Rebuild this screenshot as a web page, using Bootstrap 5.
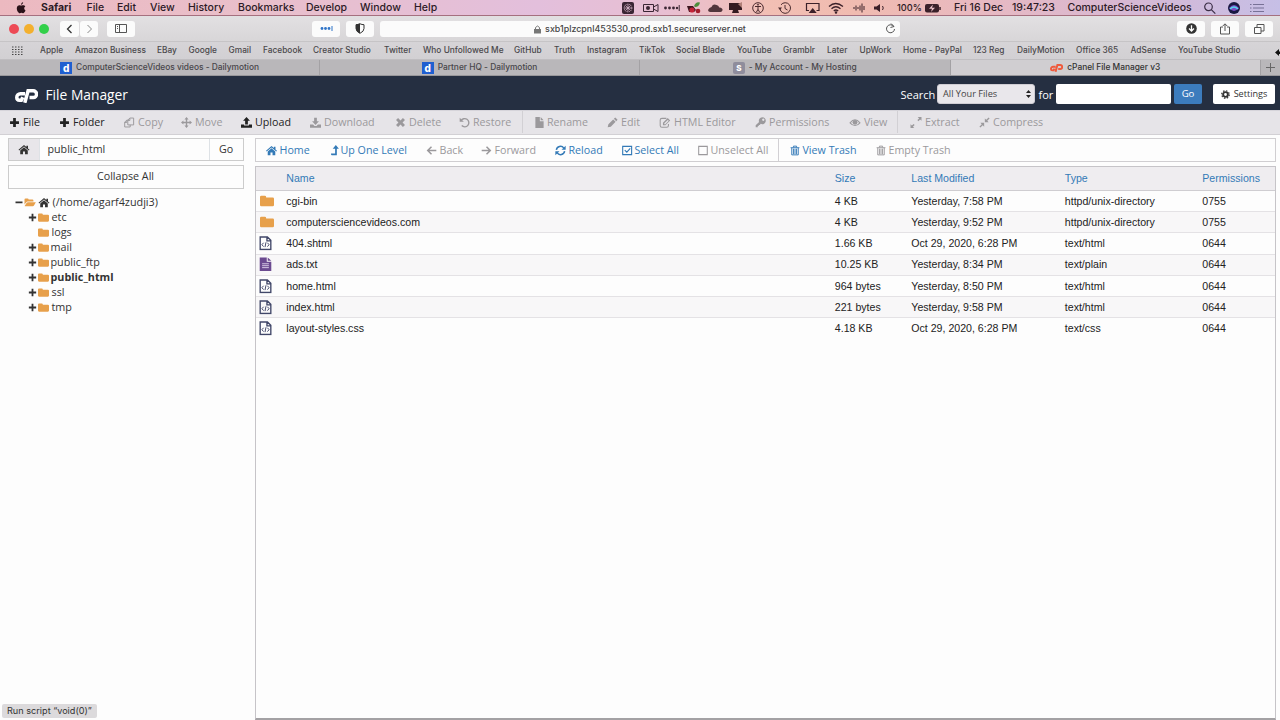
<!DOCTYPE html>
<html lang="en">
<head>
<meta charset="utf-8">
<title>cPanel File Manager v3</title>
<link href="https://cdn.jsdelivr.net/npm/bootstrap@5.3.0/dist/css/bootstrap.min.css" rel="stylesheet">
<style>
html,body{height:720px;overflow:hidden}
body{background:#fdfdfd;color:#333;font:10.7px/1 "Open Sans",sans-serif}
svg{display:block;flex:none;overflow:visible}
.ic{width:11px;height:11px;fill:currentColor}
.tracks{display:grid;align-items:center;white-space:nowrap}
.mac{font-family:Inter,sans-serif}
/* macOS menu bar */
.menubar{height:16px;padding-top:1px;color:#2c1a26;font-size:10.5px;font-weight:500;border-bottom:1px solid #a5707f;
 background:linear-gradient(90deg,#ecb9c0 0,#e9bfcb 20%,#e3bfdc 42%,#e8bfd2 52%,#f2bfb4 60%,#f0bbb0 67%,#e9b9c0 76%,#d7b8d4 88%,#c6bfe6 100%);
 grid-template-columns:15px 26px 45.5px 30.5px 33px 38px 50px 68px 54px 54px 208px 22px 22px 22px 20px 21px 23px 27px 27px 25px 22px 21px 23px 28px 29px 58px 55.5px 136px 28px 20px 31px}
.menubar svg{height:12px;width:13px}
/* Safari chrome */
.chrome{height:26px;background:linear-gradient(#e2e0e2,#d8d6d8);border-bottom:1px solid #c6c4c6;
 grid-template-columns:9px 15px 15px 21px 20px 27px 205px 34px 34px 797px 34px 34px 34px}
.dot{width:10px;height:10px;border-radius:50%}
.chrome .key{height:16px;background:#fbfbfb;border-radius:3px;display:flex;align-items:center;justify-content:center;color:#555}
.chrome .address{width:520px;font-size:8.9px;font-weight:500;color:#444;position:relative;padding-top:1px}
.reload{position:absolute;right:4px;top:2px}
.bookmarks{height:17px;background:linear-gradient(#d6d4d7,#d2d0d3);color:#4a484b;font-size:8.3px;font-weight:500;letter-spacing:.03px;
 grid-template-columns:11px 29px 35px 82px 31.5px 40px 34.5px 50px 71px 39px 91px 40px 33px 52px 37px 61px 46px 44px 32.5px 43.5px 70px 44px 59px 54.5px 47.5px 90px}
.tabs{height:17px;background:#b9b7ba;border-top:1px solid #c0bec1;border-bottom:1px solid #98979a;font-size:8.4px;font-weight:500;letter-spacing:-.02px;color:#48464a;
 grid-template-columns:320px 320px 310.5px 310.5px 19px}
.tabs>div{height:15px;display:flex;align-items:center;justify-content:center;gap:4px;border-right:1px solid #a3a1a4}
.tabs .active{background:#d0ced1;color:#333}
.fav{width:12px;height:12px;background:#1f5fd0;color:#fff;font-weight:800;font-size:10px;text-align:center;line-height:12px}
.fav.acct{background:#8f8d9c;border-radius:2px;font-size:8px}
.cursor{position:absolute;left:1275px;top:48px}
/* cPanel header */
.masthead{height:34px;padding-top:2px;background:#252f41;color:#fff;grid-template-columns:15px 30.5px 855px 36.500px 101.5px 17.5px 118px 39px 64px}
.masthead .ttl{font-size:13.8px;padding-top:2px}
.sel{height:20px;width:98px;border-radius:3px;background:#e9e7eb;border:1px solid #cfcdd3;color:#444;font-size:9.2px;padding:0 3px 0 5px}
.inp{height:20px;width:114.5px;border-radius:2px;background:#fff}
.go{height:20px;width:28px;background:#3c7cbd;border-radius:2px;font-size:9.6px}
.setb{height:20px;width:62px;background:#fff;color:#333;border-radius:2px;font-size:9.1px}
.tools{height:25px;padding-bottom:2px;background:#e6e4e8;border-bottom:1px solid #d2d0d4;border-top:1px solid #d6d4da;color:#222;
 grid-template-columns:9px 50px 65px 57px 60px 69px 85px 64px 62.5px 13.5px 72px 52px 96px 94px 48px 13px 69px 90px}
.tools>div,.acts>div,.tree>div{display:flex;align-items:center}
.tools .ic,.acts .ic{margin-right:3px}
.tools .ic{margin-top:1px}
.off{color:#9b999c}
.vr2{height:22px;width:1px;background:#d2d0d4}
/* sidebar */
.side{width:236px;margin:3px 11.5px 0 7.5px}
.path{height:23px;border:1px solid #ccc;display:grid;grid-template-columns:31px 1fr 33px;align-items:stretch}
.path>div{display:flex;align-items:center}
.cola{height:24px;margin-top:3.5px;border:1px solid #ccc}
.tree{margin-top:6px;font-size:10.8px}
.tree>div{height:15.1px;padding-left:20px}
.tree>.root{padding-left:10px}
.tree .ic{height:11px;margin-right:1px}
.tree .p1{width:9px;height:9px;margin-right:1px}
.tree span{padding-left:2px}
.tree .long{padding-left:1px}
.fold{color:#e7a04b}
/* main panel */
.main{width:1021px;padding-top:3px}
.acts{height:24px;padding-bottom:1px;border:1px solid #d0ced1;color:#337ab7;
 grid-template-columns:9.5px 65px 95px 55px 74px 67px 76px 80px 12px 86px 90px}
.files{height:554px;margin-top:4px;border:1px solid #c6c4c8;border-bottom:2px solid #a3a1a4;background:#fdfdfd;font-family:"Liberation Sans",Arial,sans-serif;font-size:10.6px;color:#222}
.frow{height:21.2px;border-bottom:1px solid #e4e2e5;grid-template-columns:3px 27.3px 548.5px 76.5px 153.5px 137.5px 73px}
.frow:nth-child(odd){background:#f8f7f8}
.frow.hd{height:24px;background:#efedf0;color:#337ab7;border-color:#cfcdd1}
.frow:last-child{border:0;background:none}
.frow svg{width:13px;height:14.5px}
.status{position:absolute;left:2px;bottom:2px;height:14px;width:95px;background:#dcdadc;border-radius:2px;font-size:9.15px;padding:0 0 1px 5px;color:#333;display:flex;align-items:center}
</style>
</head>
<body>
<svg width="0" height="0" class="position-absolute"><defs>
<symbol id="plus" viewBox="0 0 16 16"><path d="M6 1.5h4V6h4.500v4H10v4.500H6V10H1.500V6H6z"/></symbol>
<symbol id="plus2" viewBox="0 0 16 16"><path d="M6.400 1.500h3.200v4.900h4.900v3.200H9.600v4.900H6.400V9.600H1.500V6.400h4.900z"/></symbol>
<symbol id="minus" viewBox="0 0 16 16"><path d="M1 6h14v3.500H1z"/></symbol>
<symbol id="copy" viewBox="0 0 16 16"><path d="M8.500 1.500H14v10H5.500V4.500l3-3M8.500 2v3H5.500M5.500 4.500H4L1 7.500v7h8v-3M4 5v3H1" fill="none" stroke="currentColor" stroke-width="1.400"/></symbol>
<symbol id="move" viewBox="0 0 16 16"><path d="M8 0l3 3.500H9V7h3.500V5L16 8l-3.500 3V9H9v3.500h2L8 16l-3-3.500h2V9H3.500v2L0 8l3.500-3v2H7V3.500H5z"/></symbol>
<symbol id="up" viewBox="0 0 16 16"><path d="M8 0l5 5.500h-3V11H6V5.500H3zM0 11h4.500v1.500h7V11H16v4.500H0z"/></symbol>
<symbol id="down" viewBox="0 0 16 16"><path d="M8 11.500L3 6h3V1h4v5h3zM0 11h4.500l2 2h3l2-2H16v4.500H0z"/></symbol>
<symbol id="x" viewBox="0 0 16 16"><path d="M4.500 1.500L8 5l3.500-3.500 3 3L11 8l3.500 3.500-3 3L8 11l-3.500 3.500-3-3L5 8 1.500 4.500z"/></symbol>
<symbol id="undo" viewBox="0 0 16 16"><path d="M3 5.500A6 6 0 1 1 4 12.500" fill="none" stroke="currentColor" stroke-width="2"/><path d="M1 1v6h6z"/></symbol>
<symbol id="file" viewBox="0 0 12 16"><path d="M0 0h6.500v6H12v10H0zM7.700 0L12 4.800H7.700z"/></symbol>
<symbol id="pencil" viewBox="0 0 16 16"><path d="M1 15l1-4.500L9 3.500 12.500 7l-7 7zM10 2.500L12 .6 15.400 4l-2 2z"/></symbol>
<symbol id="edit" viewBox="0 0 16 16"><path d="M10 2H3.500Q1 2 1 4.500v8Q1 15 3.500 15h7q2.500 0 2.500-2.500V10" fill="none" stroke="currentColor" stroke-width="1.500"/><path d="M5 12V8.500l7-7L15.500 5l-7 7zM7 9v1.500h1.500l5-5-1.500-1.300z" fill-rule="evenodd"/></symbol>
<symbol id="key" viewBox="0 0 16 16"><path fill-rule="evenodd" d="M10.500.5a5 5 0 1 1-2.200 9.400L7 11.500H5.500V13H4v2H1v-3l4.900-4.700A5 5 0 0 1 10.500.5zM12 2.300a1.700 1.700 0 1 0 .1 0z"/></symbol>
<symbol id="eye" viewBox="0 0 16 16"><path d="M.8 8.500Q8-.5 15.200 8.500 8 16.500.8 8.500z" fill="none" stroke="currentColor" stroke-width="1.500"/><circle cx="8" cy="7.800" r="3.500"/></symbol>
<symbol id="extract" viewBox="0 0 16 16"><path d="M16 0v5.500l-2-2-2.500 2.500-1.500-1.500L12.500 2l-2-2zM0 16v-5.500l2 2L4.500 10 6 11.500 3.500 14l2 2z"/></symbol>
<symbol id="compress" viewBox="0 0 16 16"><path d="M8.500 7.500V2l2 2L14 .6 15.400 2 12 5.500l2 2zM7.500 8.500V14l-2-2L2 15.400.6 14 4 10.500l-2-2z"/></symbol>
<symbol id="home" viewBox="0 0 16 16"><path d="M0 8.500L8 1.500l3.500 3V2.500h2.300v4L16 8.500l-1 1L8 3.500 1 9.500z"/><path d="M2.500 9.500L8 4.800l5.500 4.700V15H9.500v-4h-3v4h-4z"/></symbol>
<symbol id="level" viewBox="0 0 16 16"><path d="M7 0L11.500 5.500h-3V15H1l-2-2.500H6v-7H2.500z"/></symbol>
<symbol id="left" viewBox="0 0 16 16"><path d="M15 8H2.500M8 2.500L2.500 8 8 13.500" fill="none" stroke="currentColor" stroke-width="2.200"/></symbol>
<symbol id="right" viewBox="0 0 16 16"><path d="M1 8h12.500M8 2.500L13.500 8 8 13.500" fill="none" stroke="currentColor" stroke-width="2.200"/></symbol>
<symbol id="sync" viewBox="0 0 16 16"><path d="M2 7A6 6 0 0 1 12.800 4.500M14 9A6 6 0 0 1 3.200 11.500" fill="none" stroke="currentColor" stroke-width="2.200"/><path d="M15.500 1v6h-6zM.5 15V9h6z"/></symbol>
<symbol id="chk" viewBox="0 0 16 16"><path d="M1 2h13v12H1zM4 7.500L7 10.500l5-5.500" fill="none" stroke="currentColor" stroke-width="1.600"/></symbol>
<symbol id="box" viewBox="0 0 16 16"><path d="M1 2h12.500v12H1z" fill="none" stroke="currentColor" stroke-width="1.500"/></symbol>
<symbol id="trash" viewBox="0 0 16 16"><path d="M1 3.500h14M5.500 3V1h5v2M2.800 4v11h10.400V4M5.500 5v9M8 5v9M10.500 5v9" fill="none" stroke="currentColor" stroke-width="1.500"/></symbol>
<symbol id="gear" viewBox="0 0 16 16"><g fill="none" stroke="currentColor"><circle cx="8" cy="8" r="4.200" stroke-width="3.400"/><circle cx="8" cy="8" r="6.700" stroke-width="2.200" stroke-dasharray="2.630 2.630"/></g></symbol>
<symbol id="folder" viewBox="0 0 16 16"><path d="M0 3.500Q0 2 1.500 2h4Q7 2 7 3.500V4h7.500Q16 4 16 5.500v7q0 1.500-1.500 1.500h-13Q0 14 0 12.500z"/></symbol>
<symbol id="open" viewBox="0 0 16 16"><path d="M0 11V3.500Q0 2 1.500 2h3Q6 2 6 3.500h5.500Q13 3.500 13 5v1.500H4.500Q3.500 6.500 3 7.200zM.2 13l3-4.500Q3.700 7.500 5 7.500h11.500L14 12q-.7 1.500-2 1.500H.5z"/></symbol>
<symbol id="code" viewBox="0 0 13 15"><path d="M1 1h7.500L12 4.500V14H1zM8 1v4h4" fill="none" stroke="#414769" stroke-width="1.400"/><path d="M4.500 7L2.800 9l1.700 2M8.500 7l1.700 2-1.700 2M7 6.500l-1 5" fill="none" stroke="#414769"/></symbol>
<symbol id="txt" viewBox="0 0 13 15"><path d="M.5.5h7.300V5h4.700v9.500H.5zM8.800.5l3.700 3.500H8.800z" fill="#6b4a90"/><path d="M3 7h7M3 9h7M3 11h7" stroke="#d8cbe6"/></symbol>
<symbol id="cp" viewBox="0 0 23 14"><path d="M10 4.800H5.500A3.600 3.600 0 0 0 1.800 8.500Q1.800 11.200 4.500 11.200h1.800L7.800 8.200M9.800 13.800l3.300-12h5a3.300 3.300 0 0 1 .2 6.800H14.500" fill="none" stroke="currentColor" stroke-width="3.500"/></symbol>
</defs></svg>

<header class="mac">
<div class="menubar tracks"><span></span>
<svg viewBox="0 0 13 12" fill="#2a1219"><path d="M5.500 3.400C4 2.700 1.800 3.600 1.800 6.200s1.700 5 3 5c.7 0 .9-.4 1.600-.4s1 .4 1.600.4c1 0 2-1.300 2.500-2.700C8.800 7.600 8.800 5 10.300 4.200 9.400 3 8 3 7.300 3.300q-.9.400-1.800.1zM6 2.900Q6 .7 8.200 0 8.300 2.300 6 2.900z"/></svg>
<b>Safari</b><span>File</span><span>Edit</span><span>View</span><span>History</span><span>Bookmarks</span><span>Develop</span><span>Window</span><span>Help</span>
<svg viewBox="0 0 13 12"><rect width="12" height="12" rx="2" fill="#3a2533"/><circle cx="6" cy="6" r="3.800" fill="none" stroke="#e3bfd2" stroke-dasharray="1.200 .8"/><path d="M6 3v6M3 6h6M4 4l4 4M8 4L4 8" stroke="#e3bfd2" stroke-width=".7"/></svg>
<svg viewBox="0 0 13 12" fill="none" stroke="#3a2533"><path d="M-.5 2.500h10v7H-.5zM9.500 5l4.500-2.500v7L9.500 7"/><circle cx="4" cy="6" r="2" fill="#3a2533" stroke="none"/></svg>
<svg viewBox="0 0 13 12" fill="#3a2533"><circle cx="-.5" cy="6" r="1.400"/><circle cx="3.500" cy="6" r="1.400"/><circle cx="7.500" cy="6" r="1.400"/><circle cx="11" cy="6" r="1.200"/><path d="M12.700 3h1v6h-1z"/></svg>
<svg viewBox="0 0 13 12"><path d="M-1 4h6l3 4-2 2H1z" fill="#3d1520"/><circle cx="4" cy="8" r="2.600" fill="#c22237"/><circle cx="10" cy="9" r="2.300" fill="#a31d2c"/><path d="M6 4q2-5 6-3.500Q11 5 7 5z" fill="#4c8d3b"/></svg>
<svg viewBox="0 0 13 12"><path d="M2.500 10Q-.5 9.500.3 7.500T3.500 5Q5 1.500 8.500 3q2 .3 2.800 2.500Q15 6 14.500 8.300T11.500 10z" fill="#51363c"/></svg>
<svg viewBox="0 0 13 12" fill="#341b21"><path d="M0 1h13v7H0zM4 8h5l1 3H3z"/><path d="M9 2l4-2v6z" fill="#b08078"/></svg>
<svg viewBox="0 0 13 12" fill="none" stroke="#4a2a2e"><circle cx="6" cy="6" r="5.300"/><path d="M3 4.500h6M6 4.500v2.800L4.500 10M6 7.300L7.500 10"/><circle cx="6" cy="2.700" r=".6"/></svg>
<svg viewBox="0 0 13 12" fill="none" stroke="#4a2a2e"><path d="M1 7A5.300 5.300 0 1 0 2 2.800M6 3v3.500L8.500 8"/><path d="M-1 5.500h4L1 8z" fill="#4a2a2e" stroke="none"/></svg>
<svg viewBox="0 0 13 12" fill="none" stroke="#3a2029" stroke-width="1.200"><path d="M3 8.500H.5V1.500h12.500V8.500h-2.500"/><path d="M6.700 6l4 5h-8z" fill="#3a2029" stroke="none"/></svg>
<svg viewBox="0 0 13 12" fill="none" stroke="#3a2029" stroke-width="1.300"><path d="M-2 4.500q6.500-6 14 0M.500 6.800q4.300-4 9 0M2.800 9q2.100-2 4.400 0"/><circle cx="5" cy="10.500" r=".6"/></svg>
<svg viewBox="0 0 13 12" stroke="#3a2029" fill="none"><path d="M1 5v2M3 3.500v5M5 5v2M7 3.500v5M9 1.500v9M11 4v4"/></svg>
<svg viewBox="0 0 13 12" fill="#3a2029"><path d="M0 4.500h2.500L6 2v8L2.500 7.500H0z"/><path d="M8.500 4q1.500 2 0 4" fill="none" stroke="#3a2029"/></svg>
<span style="font-size:9.200px">100%</span>
<svg viewBox="0 0 13 12" style="width:15px"><rect x="-1" y="2" width="14" height="8.500" rx="2" fill="#3a2029"/><path d="M14 5v3" stroke="#3a2029" stroke-width="1.500"/><path d="M7 2.500l-4 4.200h3l-1 3.300 4-4.200h-3z" fill="#eac0c8"/></svg>
<span>Fri 16 Dec</span><span>19:47:23</span><span>ComputerScienceVideos</span>
<svg viewBox="0 0 13 12" fill="none" stroke="#3a2d45" stroke-width="1.200"><circle cx="4.500" cy="4.800" r="3.800"/><path d="M7.300 7.600l4 4"/></svg>
<svg viewBox="0 0 13 12" style="margin-left:-4px"><circle cx="6" cy="6" r="6" fill="#191842"/><path d="M1 6q5-6 10 0-5 6-10 0" fill="#7a4cc4"/><path d="M2 7q4-4 8 0" stroke="#56d7ef" fill="none" stroke-width="1.500"/></svg>
<svg viewBox="0 0 13 12" stroke="#777196" fill="none"><path d="M1 2.500h11M1 6h11M1 9.500h11M-2 2.500h1.500M-2 6h1.500M-2 9.500h1.500"/></svg>
</div>
<div class="chrome tracks"><span></span>
<div class="dot" style="background:#ed4a55"></div><div class="dot" style="background:#f3b02e"></div><div class="dot" style="background:#33d04a"></div>
<div class="key" style="width:19px"><svg width="7" height="10" fill="none" stroke="#333" stroke-width="1.300"><path d="M5.500 1l-4 4 4 4"/></svg></div>
<div class="key" style="width:18px"><svg width="7" height="10" fill="none" stroke="#888"><path d="M1.500 1l4 4-4 4"/></svg></div>
<div class="key" style="width:28px"><svg width="12" height="9" fill="none" stroke="#555"><path d="M.5.500h11v8H.5zM4.500.5v8M2 2.500h1M2 4.500h1"/></svg></div>
<div class="key" style="width:28px"><svg width="13" height="5" fill="#2f74c8"><circle cx="2" cy="2.500" r="1.400"/><circle cx="5.500" cy="2.500" r="1.400"/><circle cx="9" cy="2.500" r="1.400"/><path d="M11.500 0h1v5h-1z"/></svg></div>
<div class="key" style="width:28px"><svg width="10" height="11"><path d="M5 .8Q7 1.700 9 1.700v3.800Q9 8.500 5 10.300 1 8.500 1 5.500V1.700Q3 1.700 5 .8z" fill="none" stroke="#333"/><path d="M5 .5L1 1.500v4Q1 8.500 5 10.500z" fill="#333"/></svg></div>
<div class="key address"><svg width="7" height="9" class="me-1" fill="#777"><path d="M0 4h7v4.500H0z"/><path d="M1.500 4V2.500q2-3 4 0V4" fill="none" stroke="#777"/></svg>sxb1plzcpnl453530.prod.sxb1.secureserver.net<svg class="reload" width="11" height="11" fill="none" stroke="#555"><path d="M8.800 3.500A4 4 0 1 0 9.500 6M6 .5l3 3-3.500 1"/></svg></div>
<div class="key" style="width:28px"><svg width="11" height="11"><circle cx="5.500" cy="5.500" r="5.300" fill="#333"/><path d="M5.500 2.300v5M3 5.500L5.500 8 8 5.500" fill="none" stroke="#fff" stroke-width="1.300"/></svg></div>
<div class="key" style="width:28px"><svg width="10" height="12" fill="none" stroke="#555"><path d="M3 4H.5v7h9V4H7M5 8V1M2.800 3L5 .8 7.200 3"/></svg></div>
<div class="key" style="width:28px"><svg width="11" height="10" fill="none" stroke="#555"><path d="M.5 3.500h6.500v6H.5zM3 3.500V.500h7v6.500H7"/></svg></div>
</div>
<div class="bookmarks tracks"><span></span>
<svg width="13" height="9"><path d="M1 1h11M1 3.500h11M1 6h11M1 8.500h11" stroke="#444" stroke-width="1.200" stroke-dasharray="1.500 1.500"/></svg>
<span>Apple</span><span>Amazon Business</span><span>EBay</span><span>Google</span><span>Gmail</span><span>Facebook</span><span>Creator Studio</span><span>Twitter</span><span>Who Unfollowed Me</span><span>GitHub</span><span>Truth</span><span>Instagram</span><span>TikTok</span><span>Social Blade</span><span>YouTube</span><span>Gramblr</span><span>Later</span><span>UpWork</span><span>Home - PayPal</span><span>123 Reg</span><span>DailyMotion</span><span>Office 365</span><span>AdSense</span><span>YouTube Studio</span>
</div>
<div class="tabs tracks">
<div><span class="fav">d</span>ComputerScienceVideos videos - Dailymotion</div>
<div><span class="fav">d</span>Partner HQ - Dailymotion</div>
<div><span class="fav acct">S</span>- My Account - My Hosting</div>
<div class="active"><svg width="13" height="8" color="#ef5a3c"><use href="#cp"/></svg>cPanel File Manager v3</div>
<div class="border-0"><svg width="9" height="9" stroke="#666"><path d="M4.500 0v9M0 4.500h9"/></svg></div>
</div>
<svg class="cursor" width="5" height="9"><path d="M0 4.500L4 1v2.500h1v2.500H4V8z" fill="#111"/></svg>
</header>

<nav class="masthead tracks"><span></span>
<svg width="23" height="14" class="mt-1"><use href="#cp"/></svg>
<span class="ttl">File Manager</span><span style="font-size:11px">Search</span>
<div class="sel d-flex align-items-center justify-content-between">All Your Files<svg width="5" height="8" fill="#222"><path d="M2.500 0L5 3H0zM2.500 8L0 5h5z"/></svg></div>
<span style="font-size:11px">for</span><div class="inp"></div>
<div class="go d-flex align-items-center justify-content-center">Go</div>
<div class="setb d-flex align-items-center justify-content-center gap-1"><svg class="ic" style="width:9px;height:9px"><use href="#gear"/></svg>Settings</div>
</nav>

<div class="tools tracks"><span></span>
<div><svg class="ic"><use href="#plus"/></svg>File</div><div><svg class="ic"><use href="#plus"/></svg>Folder</div>
<div class="off"><svg class="ic"><use href="#copy"/></svg>Copy</div><div class="off"><svg class="ic"><use href="#move"/></svg>Move</div>
<div><svg class="ic"><use href="#up"/></svg>Upload</div><div class="off"><svg class="ic"><use href="#down"/></svg>Download</div>
<div class="off"><svg class="ic"><use href="#x"/></svg>Delete</div><div class="off"><svg class="ic"><use href="#undo"/></svg>Restore</div>
<i class="vr2"></i>
<div class="off"><svg class="ic" style="width:9px"><use href="#file"/></svg>Rename</div><div class="off"><svg class="ic"><use href="#pencil"/></svg>Edit</div>
<div class="off"><svg class="ic" style="width:12px"><use href="#edit"/></svg>HTML Editor</div><div class="off"><svg class="ic"><use href="#key"/></svg>Permissions</div>
<div class="off"><svg class="ic" style="width:12px"><use href="#eye"/></svg>View</div><i class="vr2"></i>
<div class="off"><svg class="ic" style="width:12px"><use href="#extract"/></svg>Extract</div><div class="off"><svg class="ic"><use href="#compress"/></svg>Compress</div>
</div>

<div class="d-flex">
<aside class="side">
<div class="path"><div class="justify-content-center border-end" style="background:#e8e6ea"><svg class="ic" style="width:12px"><use href="#home"/></svg></div><div class="px-2 border-end">public_html</div><div class="justify-content-center">Go</div></div>
<div class="cola d-flex align-items-center justify-content-center">Collapse All</div>
<div class="tree">
<div class="root"><svg class="ic" style="width:8px;margin-left:-3px"><use href="#minus"/></svg><svg class="ic fold" style="width:12px"><use href="#open"/></svg><svg class="ic" style="width:12px;margin-left:1px"><use href="#home"/></svg><span>(/home/agarf4zudji3)</span></div>
<div><svg class="ic p1"><use href="#plus2"/></svg><svg class="ic fold"><use href="#folder"/></svg><span>etc</span></div>
<div><svg class="ic p1"></svg><svg class="ic fold"><use href="#folder"/></svg><span>logs</span></div>
<div><svg class="ic p1"><use href="#plus2"/></svg><svg class="ic fold"><use href="#folder"/></svg><span class="long">mail</span></div>
<div><svg class="ic p1"><use href="#plus2"/></svg><svg class="ic fold"><use href="#folder"/></svg><span class="long">public_ftp</span></div>
<div><svg class="ic p1"><use href="#plus2"/></svg><svg class="ic fold"><use href="#folder"/></svg><span class="long fw-bold">public_html</span></div>
<div><svg class="ic p1"><use href="#plus2"/></svg><svg class="ic fold"><use href="#folder"/></svg><span>ssl</span></div>
<div><svg class="ic p1"><use href="#plus2"/></svg><svg class="ic fold"><use href="#folder"/></svg><span>tmp</span></div>
</div>
</aside>
<main class="main">
<div class="acts tracks"><span></span>
<div><svg class="ic"><use href="#home"/></svg>Home</div><div><svg class="ic" style="width:7px"><use href="#level" width="11" height="11"/></svg>Up One Level</div>
<div class="off"><svg class="ic"><use href="#left"/></svg>Back</div><div class="off"><svg class="ic"><use href="#right"/></svg>Forward</div>
<div><svg class="ic"><use href="#sync"/></svg>Reload</div><div><svg class="ic" style="width:10px"><use href="#chk" width="11" height="11"/></svg>Select All</div>
<div class="off"><svg class="ic" style="width:10px"><use href="#box" width="11" height="11"/></svg>Unselect All</div><i class="vr2"></i>
<div><svg class="ic" style="width:10px"><use href="#trash"/></svg>View Trash</div><div class="off"><svg class="ic" style="width:10px"><use href="#trash"/></svg>Empty Trash</div>
</div>
<div class="files">
<div class="frow hd tracks"><span></span><span></span><span>Name</span><span>Size</span><span>Last Modified</span><span>Type</span><span>Permissions</span></div>
<div class="frow tracks"><span></span><svg class="fold" fill="currentColor"><use href="#folder" width="16" height="14"/></svg><span>cgi-bin</span><span>4 KB</span><span>Yesterday, 7:58 PM</span><span>httpd/unix-directory</span><span>0755</span></div>
<div class="frow tracks"><span></span><svg class="fold" fill="currentColor"><use href="#folder" width="16" height="14"/></svg><span>computersciencevideos.com</span><span>4 KB</span><span>Yesterday, 9:52 PM</span><span>httpd/unix-directory</span><span>0755</span></div>
<div class="frow tracks"><span></span><svg><use href="#code"/></svg><span>404.shtml</span><span>1.66 KB</span><span>Oct 29, 2020, 6:28 PM</span><span>text/html</span><span>0644</span></div>
<div class="frow tracks"><span></span><svg><use href="#txt"/></svg><span>ads.txt</span><span>10.25 KB</span><span>Yesterday, 8:34 PM</span><span>text/plain</span><span>0644</span></div>
<div class="frow tracks"><span></span><svg><use href="#code"/></svg><span>home.html</span><span>964 bytes</span><span>Yesterday, 8:50 PM</span><span>text/html</span><span>0644</span></div>
<div class="frow tracks"><span></span><svg><use href="#code"/></svg><span>index.html</span><span>221 bytes</span><span>Yesterday, 9:58 PM</span><span>text/html</span><span>0644</span></div>
<div class="frow tracks"><span></span><svg><use href="#code"/></svg><span>layout-styles.css</span><span>4.18 KB</span><span>Oct 29, 2020, 6:28 PM</span><span>text/css</span><span>0644</span></div>
</div>
</main>
</div>
<div class="status mac">Run script “void(0)”</div>
<script src="https://cdn.jsdelivr.net/npm/bootstrap@5.3.0/dist/js/bootstrap.bundle.min.js"></script>
</body>
</html>
